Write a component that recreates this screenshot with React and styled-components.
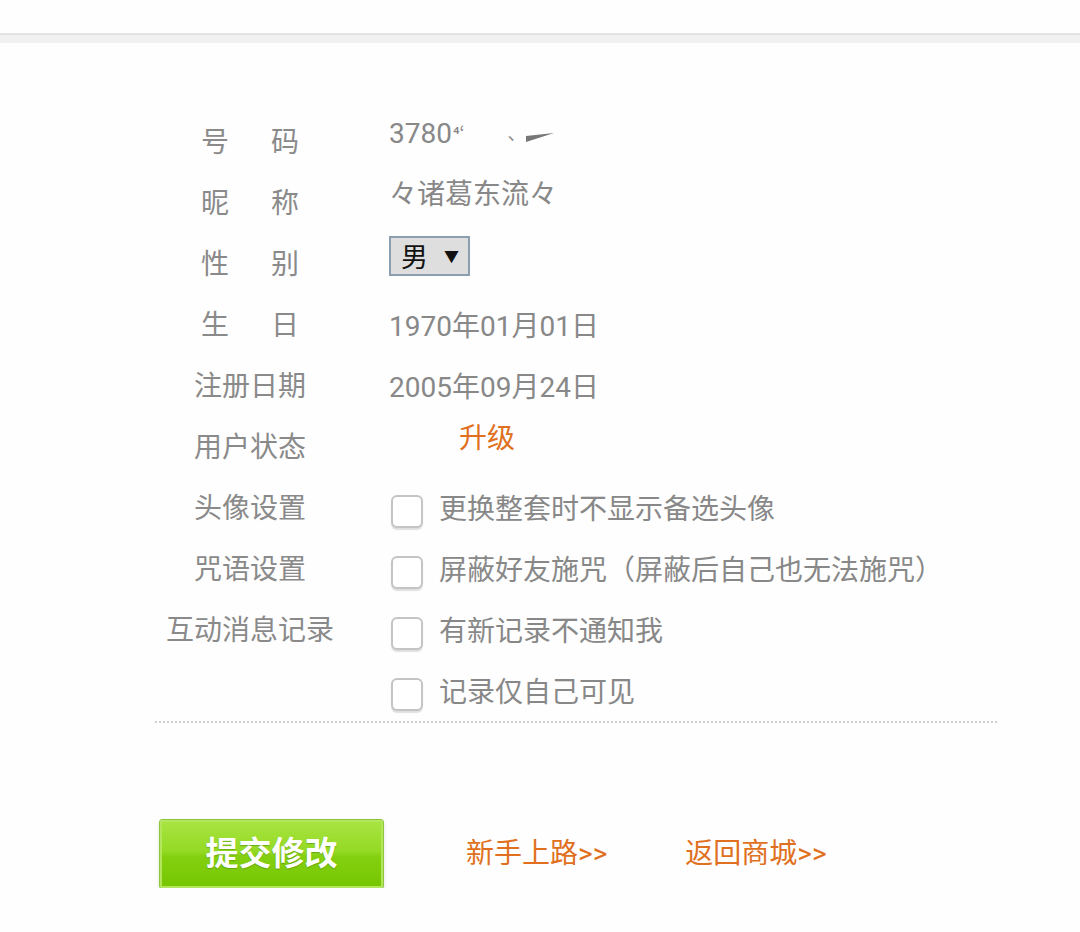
import React from 'react';
import styled, { createGlobalStyle } from 'styled-components';

const GlobalStyle = createGlobalStyle`
  html, body {
    margin: 0;
    padding: 0;
    background: #fefefe;
  }
  body {
    font-family: Roboto, "Noto Sans CJK SC", sans-serif;
  }
`;

const rows = [
  { key: 'hm', label: ['号', '码'], type: 'id', raise: 7 },
  { key: 'nc', label: ['昵', '称'], value: '々诸葛东流々', raise: 10 },
  { key: 'xb', label: ['性', '别'], type: 'select' },
  { key: 'sr', label: ['生', '日'], value: '1970年01月01日' },
  { key: 'zc', label: ['注册日期'], value: '2005年09月24日' },
  { key: 'zt', label: ['用户状态'], type: 'upgrade', raise: 10 },
  { key: 'tx', label: ['头像设置'], check: '更换整套时不显示备选头像' },
  { key: 'zy', label: ['咒语设置'], check: '屏蔽好友施咒（屏蔽后自己也无法施咒）' },
  { key: 'hd', label: ['互动消息记录'], check: '有新记录不通知我' },
  { key: 'jl', label: [], check: '记录仅自己可见' },
];

const TopBand = styled.div`
  height: 33px;
  background: #fefefe;
  border-bottom: 2px solid #e2e2e2;
  box-shadow: 0 8px 0 #f1f1f1;
  margin-bottom: 8px;
`;

const Form = styled.div`
  padding: 67px 0 0 155px;
  width: 842px;
`;

const Row = styled.div`
  display: grid;
  grid-template-columns: 190px 1fr;
  column-gap: 44px;
  align-items: center;
  height: 61px;
`;

const Label = styled.div`
  display: flex;
  justify-content: center;
  gap: ${(p) => (p.$spaced ? '42px' : '0')};
  font-size: 28px;
  color: #8a8a8a;
  padding-bottom: 2px;
`;

/* $raise lifts the value above the row's centre line by that many pixels */
const Value = styled.div`
  display: flex;
  align-items: center;
  font-size: 28px;
  color: #888;
  padding-left: ${(p) => p.$indent || 0}px;
  margin-bottom: ${(p) => (p.$raise || 0) * 2}px;
`;

const Smudge = styled.span`
  font-size: 18px;
  margin-left: 1px;
  margin-right: ${(p) => p.$after || 30}px;
  align-self: flex-start;
  margin-top: 2px;
`;

const Select = styled.div`
  display: inline-flex;
  align-items: center;
  gap: 16px;
  box-sizing: border-box;
  width: 81px;
  height: 40px;
  margin-top: -14px;
  padding: 0 10px;
  background: #dedede;
  border: 2px solid #8c9fb0;
  color: #111;
  font-size: 27px;
  font-family: "Noto Sans CJK SC", sans-serif;

  span {
    font-size: 15px;
  }
`;

const Orange = styled.span`
  color: #e07020;
  font-size: 28px;
  font-family: "Noto Sans CJK SC", sans-serif;
`;

const Box = styled.span`
  box-sizing: border-box;
  width: 32px;
  height: 33px;
  margin: 10px 16px 0 2px;
  border: 2px solid #c4c4c4;
  border-radius: 6px;
  background: #fff;
  box-shadow: 0 2px 1px rgba(0, 0, 0, 0.12);
  flex: none;
`;

const Divider = styled.div`
  margin-top: 1px;
  border-top: 2px dotted #cfcfcf;
`;

const Actions = styled.div`
  display: flex;
  align-items: center;
  padding: 97px 0 0 160px;
`;

const SubmitButton = styled.button`
  width: 223px;
  height: 68px;
  padding: 0 0 6px;
  border: 2px solid #b3e65c;
  outline: 1px solid #8cc83a;
  border-radius: 2px;
  background: linear-gradient(#a8e440 0%, #94da24 46%, #84d010 54%, #76c602 100%);
  box-shadow: 0 2px 4px rgba(0, 0, 0, 0.2);
  color: #fff;
  font-size: 33px;
  font-weight: bold;
  font-family: "Noto Sans CJK SC", sans-serif;
  text-shadow: 0 1px 1px rgba(60, 110, 0, 0.45);
  cursor: pointer;
`;

const Links = styled.div`
  display: flex;
  gap: 78px;
  margin-left: 83px;
  margin-top: -6px;
`;

const Link = styled.a`
  color: #e07020;
  font-size: 28px;
  text-decoration: none;
  cursor: pointer;
`;

function RowValue({ row }) {
  if (row.type === 'id') {
    return (
      <Value $raise={row.raise}>
        3780<Smudge $after={42}>⁴ʻ</Smudge>
        <Smudge>、</Smudge>
        <svg width="28" height="10" viewBox="0 0 28 10" style={{ marginLeft: -30, marginTop: 8 }}>
          <polygon points="0,3 28,0 0,9" fill="#777" />
        </svg>
      </Value>
    );
  }
  if (row.type === 'select') {
    return (
      <Value>
        <Select>
          男<span>▼</span>
        </Select>
      </Value>
    );
  }
  if (row.type === 'upgrade') {
    return (
      <Value $indent={70} $raise={row.raise}>
        <Orange>升级</Orange>
      </Value>
    );
  }
  if (row.check) {
    return (
      <Value>
        <Box />
        {row.check}
      </Value>
    );
  }
  return <Value $raise={row.raise}>{row.value}</Value>;
}

export default function App() {
  return (
    <>
      <GlobalStyle />
      <TopBand />
      <Form>
        {rows.map((row) => (
          <Row key={row.key}>
            <Label $spaced={row.label.length > 1}>
              {row.label.map((t) => (
                <span key={t}>{t}</span>
              ))}
            </Label>
            <RowValue row={row} />
          </Row>
        ))}
        <Divider />
      </Form>
      <Actions>
        <SubmitButton>提交修改</SubmitButton>
        <Links>
          <Link>新手上路&gt;&gt;</Link>
          <Link>返回商城&gt;&gt;</Link>
        </Links>
      </Actions>
    </>
  );
}
